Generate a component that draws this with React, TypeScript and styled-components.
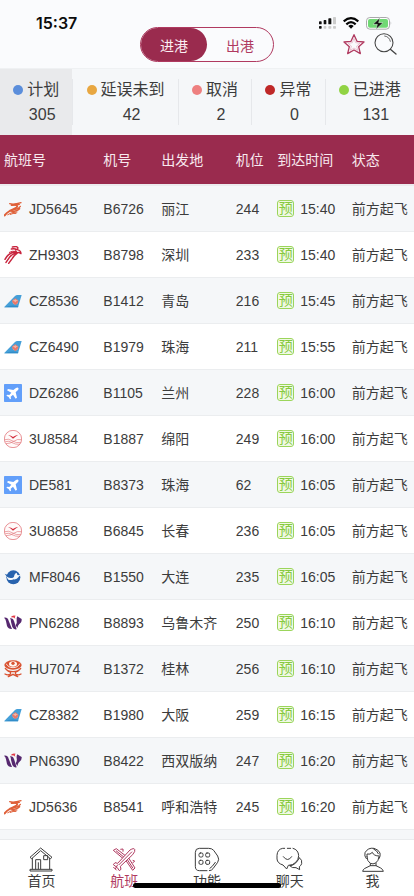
import React from 'react';
import styled, { createGlobalStyle } from 'styled-components';

const wine = '#9a2b4e';
const pink = '#b03a60';
const ink = '#3c3c3c';

const GlobalStyle = createGlobalStyle`
  * { box-sizing: border-box; }
  body {
    margin: 0;
    background: #f5f7f9;
    color: ${ink};
    font-family: "Liberation Sans", "Noto Sans CJK SC", sans-serif;
    font-size: 14px;
  }
  button { font: inherit; color: inherit; background: none; border: 0; padding: 0; cursor: pointer; }
  svg { display: block; flex: none; }
`;

const Page = styled.div`
  display: flex;
  flex-direction: column;
  height: 100vh;
`;

const TopBar = styled.header`
  display: grid;
  grid-template-columns: 1fr auto 1fr;
  flex: none;
  height: 69px;
  background: #fafbfd;
  border-bottom: 1px solid #eff1f3;
`;

const Clock = styled.time`
  padding: 13px 0 0 36px;
  font: 600 16px/20px Inter, sans-serif;
  color: #0c0c0c;
`;

const Segment = styled.div`
  display: flex;
  width: 134px;
  height: 35px;
  margin-top: 27px;
  border: 1px solid ${pink};
  border-radius: 18px;
`;

const SegmentButton = styled.button<{ $active?: boolean }>`
  flex: 1;
  padding-top: 3px;
  border-radius: 17px;
  line-height: 30px;
  ${({ $active }) => ($active ? `background: ${wine}; color: #fbeef3;` : `color: ${pink};`)}
`;

const TopRight = styled.div`
  display: flex;
  flex-direction: column;
  align-items: flex-end;
  gap: 3px;
  padding-top: 16px;
`;

const DeviceIcons = styled.div`
  display: flex;
  align-items: center;
  gap: 7px;
  height: 14px;
  padding-right: 22px;
`;

const Actions = styled.div`
  display: flex;
  gap: 9px;
  padding-right: 17px;
`;

const Stats = styled.div`
  display: flex;
  flex: none;
  height: 66px;
  background: #f5f7f9;
`;

const Stat = styled.button<{ $active?: boolean }>`
  flex: 1 1 auto;
  display: grid;
  grid-template-columns: 10px auto;
  column-gap: 4px;
  justify-content: center;
  align-content: center;
  align-items: center;
  font-size: 16px;
  line-height: 25px;
  padding: 0 12px;
  background: ${({ $active }) => ($active ? '#e9eaec' : 'transparent')};
`;

const Divider = styled.span`
  flex: none;
  width: 1px;
  margin: 10px 0;
  background: #e6e8eb;
`;

const Dot = styled.span<{ $color: string }>`
  width: 10px;
  height: 10px;
  border-radius: 50%;
  background: ${({ $color }) => $color};
`;

const Count = styled.span`
  grid-column: 2;
  padding-right: 2px;
`;

const Scroller = styled.main`
  flex: 1;
  min-height: 0;
  overflow: hidden auto;
  scrollbar-width: none;
`;

const Table = styled.table`
  width: 100%;
  table-layout: fixed;
  border-collapse: separate;
  border-spacing: 0;
  white-space: nowrap;
`;

const Col = styled.col<{ $share: number }>`
  width: ${({ $share }) => $share}%;
`;

const Th = styled.th`
  height: 51px;
  padding: 0 0 0 4px;
  background: ${wine};
  border-bottom: 2px solid #ecebee;
  color: #f8e9ef;
  font-weight: 400;
  line-height: 20px;
  text-align: left;
`;

const Row = styled.tr`
  background: #fff;
  &:nth-child(odd) { background: #f5f7f9; }
`;

const Td = styled.td`
  height: 46px;
  padding: 0 0 0 4px;
  border-bottom: 1px solid #ebedef;
  line-height: 20px;
`;

const Flight = styled.div`
  display: flex;
  align-items: center;
  gap: 7px;
`;

const Arrival = styled.div`
  display: flex;
  align-items: center;
  gap: 6px;
`;

const Estimate = styled.span`
  width: 17px;
  height: 17px;
  border: 1px solid #9bd55b;
  border-radius: 3px;
  background: #f0f9e4;
  color: #87ca3e;
  font-size: 14px;
  line-height: 15px;
  text-align: center;
`;

const TabBar = styled.nav`
  position: relative;
  display: flex;
  flex: none;
  height: 57px;
  background: #fff;
  border-top: 1px solid #e9ebed;
`;

const Tab = styled.button<{ $active?: boolean }>`
  flex: 1;
  display: flex;
  flex-direction: column;
  align-items: center;
  padding-top: 7px;
  line-height: 18px;
  color: ${({ $active }) => ($active ? pink : ink)};
`;

const HomeIndicator = styled.span`
  position: absolute;
  bottom: 8px;
  left: 50%;
  width: 148px;
  height: 5px;
  border-radius: 3px;
  background: #000;
  transform: translateX(-50%);
`;

const Signal = () => (
  <svg width="17" height="12" viewBox="0 0 51 36" fill="#111">
    <rect x="0" y="13" width="8" height="9" rx="2" />
    <rect x="14" y="9" width="8" height="13" rx="2" />
    <rect x="28" y="4" width="9" height="18" rx="2" />
    <rect x="42" y="0" width="9" height="22" rx="2" fill="#ccc" />
    <rect x="0" y="27" width="8" height="8" rx="2" />
    <g fill="#ccc">
      <rect x="14" y="27" width="8" height="8" rx="2" />
      <rect x="28" y="27" width="9" height="8" rx="2" />
      <rect x="42" y="27" width="9" height="8" rx="2" />
    </g>
  </svg>
);

const Wifi = () => (
  <svg width="16" height="12" viewBox="0 0 48 36" fill="none" stroke="#050505" strokeWidth="6.5">
    <path d="M2 13Q24 -6 46 13" />
    <path d="M10 22Q24 9 38 22" />
    <path d="M16 27Q24 20 32 27L24 35Z" fill="#050505" stroke="none" />
  </svg>
);

const Battery = () => (
  <svg width="26" height="13" viewBox="0 0 78 39">
    <rect x="1.5" y="1.5" width="69" height="35" rx="10" fill="#fff" stroke="#a9a9ab" strokeWidth="3" />
    <rect x="6" y="6" width="60" height="26" rx="6" fill="#70d874" />
    <path d="M74 13q4 6 0 12z" fill="#a9a9ab" />
    <path d="M42 2L21 22H34L30 37L51 17H38Z" fill="#111" stroke="#e9fbe9" strokeWidth="1.5" />
  </svg>
);

const Star = () => (
  <svg width="22" height="22" viewBox="0 0 66 66" fill="none" strokeLinejoin="round">
    <path d="M33 5L42 25L63 27L47 41L52 62L33 51L14 62L19 41L3 27L24 25Z" stroke={pink} strokeWidth="4" />
    <path d="M33 16L38 29L51 31L41 39L44 52L33 45L22 52L25 39L15 31L28 29Z" stroke="#e3a9bc" strokeWidth="2" />
  </svg>
);

const Search = () => (
  <svg width="23" height="22" viewBox="0 0 69 66" fill="none" stroke="#444" strokeWidth="3.2" strokeLinecap="round">
    <circle cx="30" cy="29" r="27" />
    <path d="M32 9A20 20 0 0 1 49 25" strokeWidth="2.4" />
    <path d="M49 49L66 63" strokeWidth="4" />
  </svg>
);

const Capital = () => (
  <svg width="18" height="18" viewBox="0 0 54 54" fill="none" stroke="#df6039" strokeLinecap="round" strokeLinejoin="round">
    <path d="M17 11Q29 15 51 8M22 16Q33 17 46 13" strokeWidth="4" />
    <path d="M34 14Q44 18 36 24Q28 28 17 33Q8 38 2 46" strokeWidth="6" />
    <path d="M49 19Q42 28 26 29M47 26Q39 34 23 34" strokeWidth="4" />
    <path d="M11 44Q21 36 39 36M19 43Q27 39 36 40" strokeWidth="3" />
  </svg>
);

const Shenzhen = () => (
  <svg width="18" height="18" viewBox="0 0 54 54" fill="none" stroke="#c8243d" strokeLinecap="round" strokeLinejoin="round">
    <path d="M25 3Q40 -1 42 6Q42 10 35 12M22 9Q32 7 40 11Q51 14 51 23Q44 17 37 21" strokeWidth="4" />
    <path d="M37 17Q24 17 14 26Q7 32 3 40M38 20Q26 23 18 32L6 49M39 22Q31 27 25 37L14 52" strokeWidth="4.5" />
    <path d="M16 19Q25 14 35 16" strokeWidth="3" />
  </svg>
);

const Southern = () => (
  <svg width="18" height="18" viewBox="0 0 54 54">
    <path d="M0 46L33 12Q36 9 40 9H53L42 46Z" fill="#459fd8" />
    <path d="M1 46Q22 37 43 43L42 46Z" fill="#318dc9" />
    <circle cx="34" cy="29" r="8" fill="#f2b6a6" />
    <path d="M34 39Q22 31 25 24Q31 26 34 31Q38 25 43 25Q45 32 34 39Z" fill="#e8796b" />
    <path d="M29 23Q34 18 39 23" stroke="#e8796b" strokeWidth="3" fill="none" />
  </svg>
);

const Generic = () => (
  <svg width="18" height="18" viewBox="0 0 54 54">
    <rect width="54" height="54" rx="2" fill="#629ffa" />
    <path d="M42 11Q46 14 42 18L35 25L39 41L35 44L27 32L20 38L21 44L18 46L14 39L7 35L10 32L16 33L22 26L9 19L12 15L28 18L36 12Q40 9 42 11Z" fill="#fff" />
  </svg>
);

const Sichuan = () => (
  <svg width="18" height="18" viewBox="0 0 54 54" fill="none" stroke="#df6b70">
    <circle cx="27" cy="27" r="26" strokeWidth="2.2" fill="#fffafa" />
    <path d="M12 15Q22 16 27 21Q32 16 43 14Q36 19 27 26Q20 19 12 15Z" fill="#d32939" stroke="none" />
    <path d="M2 29Q15 25 24 32Q36 40 51 38M4 35Q15 31 24 38Q34 44 48 43M52 29Q40 26 29 34Q19 41 6 41" strokeWidth="1.8" />
  </svg>
);

const Xiamen = () => (
  <svg width="18" height="18" viewBox="0 0 54 54">
    <circle cx="28" cy="28" r="21" fill="#2863ae" />
    <path d="M2 17Q10 18 15 26L12 27Q6 24 2 17Z" fill="#2863ae" />
    <path d="M7 25Q15 33 27 29Q31 28 31 22Q32 16 38 14Q39 20 42 22Q46 20 50 21Q45 24 43 28Q39 35 29 34Q24 38 13 35Q9 31 7 25Z" fill="#f5f9fd" />
  </svg>
);

const West = () => (
  <svg width="18" height="18" viewBox="0 0 54 54" fill="#56286f">
    <path d="M0 11Q11 9 14 20L24 45Q13 46 9 36L6 22Q5 14 0 11Z" />
    <path d="M18 13Q28 11 30 21L38 46Q29 48 25 39L21 24Q21 17 18 13Z" />
    <path d="M40 7Q47 12 53 15Q54 25 46 30Q42 33 40 42L35 34Q40 27 38 19Q37 12 40 7Z" />
    <path d="M20 10Q25 2 35 5Q30 8 34 14Q28 9 20 10Z" fill="#e33a47" />
  </svg>
);

const Hainan = () => (
  <svg width="18" height="18" viewBox="0 0 54 54" fill="none" stroke="#d95332" strokeLinecap="round">
    <ellipse cx="27" cy="15" rx="26" ry="14" fill="#d95332" stroke="none" />
    <path d="M7 12Q13 23 27 23T47 12" stroke="#fff" strokeWidth="2.5" />
    <ellipse cx="27" cy="12" rx="12" ry="8" fill="#fff7f1" stroke="none" />
    <circle cx="27" cy="10" r="5" fill="#d95332" stroke="none" />
    <path d="M4 25Q10 35 27 35T50 25M12 33Q24 37 18 43Q11 47 3 42M42 33Q30 37 36 43Q43 47 51 42M13 50L27 43L41 50" strokeWidth="4" />
  </svg>
);

const logos: Record<string, () => React.JSX.Element> = {
  JD: Capital, ZH: Shenzhen, CZ: Southern, DZ: Generic, DE: Generic, '3U': Sichuan, MF: Xiamen, PN: West, HU: Hainan,
};

const HomeIcon = () => (
  <svg width="24" height="25" viewBox="0 0 72 75" fill="none" stroke="currentColor" strokeWidth="3" strokeLinejoin="round">
    <path d="M3 31L35 3L69 31L64 35L35 11L8 35ZM10 33V67M62 33V67M3 67H69V72H3ZM20 67V38H35V67M28 67V46M44 26H56V38H44Z" />
  </svg>
);

const FlightsIcon = () => (
  <svg width="24" height="25" viewBox="0 0 72 75" fill="none" stroke="currentColor" strokeWidth="3" strokeLinejoin="round">
    <path d="M4 10L13 5L44 29L36 37ZM40 38L48 30L69 63L62 70Z" fill="#fff" />
    <path d="M12 11L39 33M46 38L63 64M25 7L33 6V14M62 40L68 42L62 48" />
    <path d="M9 47L17 49L54 9Q66 2 68 7Q71 12 62 23L25 58L27 67L22 71L16 62L4 53Z" fill="#fff" />
    <path d="M20 54L60 14M17 53L10 66M4 60L14 70" />
  </svg>
);

const FeaturesIcon = () => (
  <svg width="26" height="25" viewBox="0 0 78 75" fill="none" stroke="currentColor" strokeWidth="3" strokeLinecap="round">
    <path d="M39 71H16Q4 71 4 58V16Q4 4 16 4H44Q54 4 59 10L71 27Q77 37 71 46L57 65Q53 71 46 71" />
    <path d="M48 64Q53 62 64 46" />
    <rect x="15" y="18" width="12" height="12" rx="4" />
    <rect x="35" y="18" width="12" height="12" rx="4" />
    <rect x="15" y="40" width="12" height="12" rx="4" />
    <rect x="35" y="40" width="12" height="12" rx="4" />
  </svg>
);

const ChatIcon = () => (
  <svg width="27" height="25" viewBox="0 0 81 75" fill="none" stroke="currentColor" strokeWidth="3" strokeLinecap="round" strokeLinejoin="round">
    <path d="M26 4H20Q4 7 3 25V36Q4 49 21 54L32 66L37 55Q50 55 58 47Q68 39 68 26Q67 8 51 4M34 4H44" />
    <path d="M22 29Q35 47 47 29M70 32Q80 39 77 50Q75 56 70 59L71 68L60 62Q48 64 41 56Q57 57 70 33" />
  </svg>
);

const MeIcon = () => (
  <svg width="22" height="25" viewBox="0 0 66 75" fill="none" stroke="currentColor" strokeWidth="3" strokeLinecap="round" strokeLinejoin="round">
    <path d="M13 35Q6 27 9 17Q18 1 36 4Q50 8 54 18Q56 26 52 34M15 29Q15 43 25 49Q33 53 41 48Q50 42 51 29M15 29V21Q25 24 31 16Q35 27 51 27M35 6Q46 11 49 20" />
    <path d="M25 50V56L7 65Q3 68 2 73H64Q63 67 56 63L42 56V49M25 56H42" />
  </svg>
);

const stats = [
  { label: '计划', count: 305, color: '#5b8edb' },
  { label: '延误未到', count: 42, color: '#e8a741' },
  { label: '取消', count: 2, color: '#ee8080' },
  { label: '异常', count: 0, color: '#bf2828' },
  { label: '已进港', count: 131, color: '#91d344' },
];

const columns: [string, number][] = [
  ['航班号', 24], ['机号', 14], ['出发地', 18], ['机位', 10], ['到达时间', 18], ['状态', 16],
];

const flights = [
  ['JD5645', 'B6726', '丽江', '244', '15:40'],
  ['ZH9303', 'B8798', '深圳', '233', '15:40'],
  ['CZ8536', 'B1412', '青岛', '216', '15:45'],
  ['CZ6490', 'B1979', '珠海', '211', '15:55'],
  ['DZ6286', 'B1105', '兰州', '228', '16:00'],
  ['3U8584', 'B1887', '绵阳', '249', '16:00'],
  ['DE581', 'B8373', '珠海', '62', '16:05'],
  ['3U8858', 'B6845', '长春', '236', '16:05'],
  ['MF8046', 'B1550', '大连', '235', '16:05'],
  ['PN6288', 'B8893', '乌鲁木齐', '250', '16:10'],
  ['HU7074', 'B1372', '桂林', '256', '16:10'],
  ['CZ8382', 'B1980', '大阪', '259', '16:15'],
  ['PN6390', 'B8422', '西双版纳', '247', '16:20'],
  ['JD5636', 'B8541', '呼和浩特', '245', '16:20'],
];

const tabs = [
  { label: '首页', Icon: HomeIcon },
  { label: '航班', Icon: FlightsIcon },
  { label: '功能', Icon: FeaturesIcon },
  { label: '聊天', Icon: ChatIcon },
  { label: '我', Icon: MeIcon },
];

export default function App() {
  return (
    <Page>
      <GlobalStyle />
      <TopBar>
        <Clock>15:37</Clock>
        <Segment>
          <SegmentButton $active aria-pressed="true">进港</SegmentButton>
          <SegmentButton aria-pressed="false">出港</SegmentButton>
        </Segment>
        <TopRight>
          <DeviceIcons>
            <Signal />
            <Wifi />
            <Battery />
          </DeviceIcons>
          <Actions>
            <button aria-label="收藏"><Star /></button>
            <button aria-label="搜索"><Search /></button>
          </Actions>
        </TopRight>
      </TopBar>
      <Stats>
        {stats.map(({ label, count, color }, i) => (
          <React.Fragment key={label}>
            {i > 0 && <Divider />}
            <Stat $active={i === 0}>
              <Dot $color={color} />
              <span>{label}</span>
              <Count>{count}</Count>
            </Stat>
          </React.Fragment>
        ))}
      </Stats>
      <Scroller>
        <Table>
          <colgroup>
            {columns.map(([name, share]) => <Col key={name} $share={share} />)}
          </colgroup>
          <thead>
            <tr>{columns.map(([name]) => <Th key={name} scope="col">{name}</Th>)}</tr>
          </thead>
          <tbody>
            {flights.map(([no, reg, from, stand, time]) => {
              const Logo = logos[no.slice(0, 2)];
              return (
                <Row key={no}>
                  <Td><Flight><Logo />{no}</Flight></Td>
                  <Td>{reg}</Td>
                  <Td>{from}</Td>
                  <Td>{stand}</Td>
                  <Td><Arrival><Estimate>预</Estimate>{time}</Arrival></Td>
                  <Td>前方起飞</Td>
                </Row>
              );
            })}
          </tbody>
        </Table>
      </Scroller>
      <TabBar>
        {tabs.map(({ label, Icon }, i) => (
          <Tab key={label} $active={i === 1}>
            <Icon />
            {label}
          </Tab>
        ))}
        <HomeIndicator />
      </TabBar>
    </Page>
  );
}
